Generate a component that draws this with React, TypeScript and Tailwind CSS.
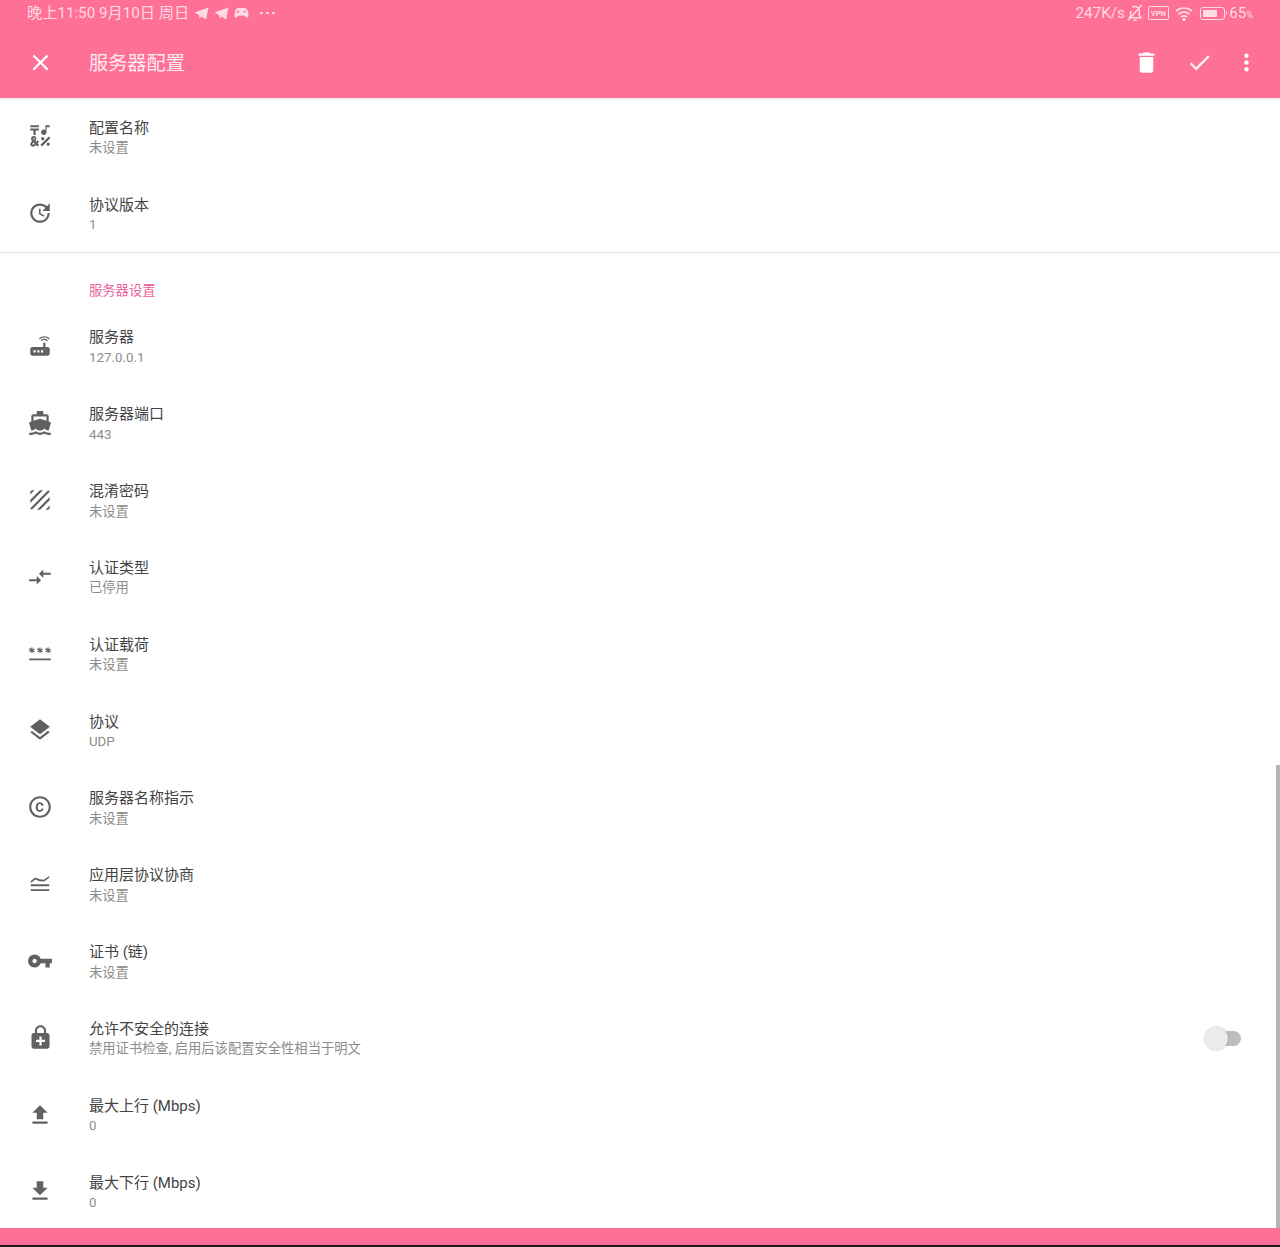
import React from "react";

const I = ({ d, size = 26, cls = "text-[#616161]" }: { d: string; size?: number; cls?: string }) => (
  <svg width={size} height={size} viewBox="0 0 24 24" fill="currentColor" className={cls}>
    <path d={d} fillRule="evenodd" />
  </svg>
);

const star = (x: number) =>
  `M${x - 0.6} 7h1.2v1.7l1.5-.85.6 1-1.5.85 1.5.85-.6 1-1.5-.85V12h-1.2v-1.7l-1.5.85-.6-1 1.5-.85-1.5-.85.6-1 1.5.85z`;

const P = {
  symbols:
    "M3 2h8v2H3zM6 11h2V7h3V5H3v2h3zM12.404 20.182l7.778-7.778 1.414 1.414-7.778 7.778zM14.5 13a1.5 1.5 0 1 1 0 3 1.5 1.5 0 0 1 0-3zM19.5 18a1.5 1.5 0 1 1 0 3 1.5 1.5 0 0 1 0-3zM15.5 11c1.38 0 2.5-1.12 2.5-2.5V4h3V2h-4v4.51C16.58 6.19 16.07 6 15.5 6 14.12 6 13 7.12 13 8.5S14.12 11 15.5 11zM9.74 15.96l-1.41 1.41-.71-.71.35-.35c.98-.98.98-2.56 0-3.54-.49-.49-1.13-.73-1.77-.73s-1.28.24-1.77.73c-.98.98-.98 2.56 0 3.54l.35.35-1.06 1.06c-.98.98-.98 2.56 0 3.54.49.49 1.13.74 1.77.74s1.28-.24 1.77-.73l1.06-1.06 1.41 1.41 1.41-1.41-1.41-1.41 1.41-1.41zM5.85 14.1c.2-.2.4-.2.5-.2s.3 0 .5.2c.28.28.28.72 0 1l-.35.35-.35-.35c-.58-.58-.58-.72-.3-1zM6.2 19.9c-.2.2-.6.2-1 0-.28-.28-.28-.72 0-1l1.06-1.06.71.71z",
  update:
    "M21 10.12h-6.78l2.74-2.82c-2.73-2.7-7.15-2.8-9.88-.1-2.73 2.71-2.73 7.08 0 9.79s7.15 2.71 9.88 0C18.32 15.65 19 14.08 19 12.1h2c0 1.98-.88 4.55-2.64 6.29-3.51 3.48-9.21 3.48-12.72 0-3.5-3.47-3.53-9.11-.02-12.58s9.14-3.47 12.65 0L21 3v7.12zM12.5 8v4.25l3.5 2.08-.72 1.21L11 13V8h1.5z",
  router:
    "M20.2 5.9l.8-.8C19.6 3.7 17.8 3 16 3s-3.6.7-5 2.1l.8.8C13 4.8 14.5 4.2 16 4.2s3 .6 4.2 1.7zm-.9.8c-.9-.9-2.1-1.4-3.3-1.4s-2.4.5-3.3 1.4l.8.8c.7-.7 1.6-1 2.5-1 .9 0 1.8.3 2.5 1l.8-.8zM19 13h-2V9h-2v4H5c-1.1 0-2 .9-2 2v4c0 1.1.9 2 2 2h14c1.1 0 2-.9 2-2v-4c0-1.1-.9-2-2-2zM8 18H6v-2h2v2zm3.5 0h-2v-2h2v2zm3.5 0h-2v-2h2v2z",
  boat:
    "M20 21c-1.39 0-2.78-.47-4-1.32-2.44 1.71-5.56 1.71-8 0C6.78 20.53 5.39 21 4 21H2v2h2c1.38 0 2.74-.35 4-.99 2.52 1.29 5.48 1.29 8 0 1.26.65 2.62.99 4 .99h2v-2h-2zM3.95 19H4c1.6 0 3.02-.88 4-2 .98 1.12 2.4 2 4 2s3.02-.88 4-2c.98 1.12 2.4 2 4 2h.05l1.89-6.68c.08-.26.06-.54-.06-.78s-.34-.42-.6-.5L20 10.62V6c0-1.1-.9-2-2-2h-3V1H9v3H6c-1.1 0-2 .9-2 2v4.62l-1.29.42c-.26.08-.48.26-.6.5s-.15.52-.06.78L3.95 19zM6 6h12v3.97L12 8 6 9.97V6z",
  texture:
    "M19.51 3.08L3.08 19.51c.09.34.27.65.51.9.25.24.56.42.9.51L20.93 4.49c-.19-.69-.73-1.23-1.42-1.41zM11.88 3L3 11.88v2.83L14.71 3h-2.83zM5 3c-1.1 0-2 .9-2 2v2l4-4H5zm14 18c.55 0 1.05-.22 1.41-.59.37-.36.59-.86.59-1.41v-2l-4 4h2zm-9.71 0h2.83L21 12.12V9.29L9.29 21z",
  compare: "M9.01 14H2v2h7.01v3L13 15l-3.99-4v3zm5.98-1v-3H22V8h-7.01V5L11 9l3.99 4z",
  password: `M2 17h20v1.8H2z${star(4.5)}${star(12)}${star(19.5)}`,
  layers: "M11.99 18.54l-7.37-5.73L3 14.07l9 7 9-7-1.63-1.27-7.38 5.74zM12 16l7.36-5.73L21 9l-9-7-9 7 1.63 1.27L12 16z",
  copyright:
    "M11.88 9.14c1.28.06 1.61 1.15 1.63 1.66h1.79c-.08-1.98-1.49-3.19-3.45-3.19C9.64 7.61 8 9 8 12.14c0 1.94.93 4.24 3.84 4.24 2.22 0 3.41-1.65 3.44-2.95h-1.79c-.03.59-.45 1.38-1.63 1.44-1.31-.04-1.86-1.06-1.86-2.73 0-2.89 1.28-2.98 1.88-3zM12 2C6.48 2 2 6.48 2 12s4.48 10 10 10 10-4.48 10-10S17.52 2 12 2zm0 18c-4.41 0-8-3.59-8-8s3.59-8 8-8 8 3.59 8 8-3.59 8-8 8z",
  alpn:
    "M3.500 12.300h17v1.700h-17zM3.500 16.800h17v1.700h-17zM3.500 9.300L7.500 6l4.500 1.600 3.500.4 5-3.500v1.800l-4.700 3.400-4.300-.3-3.700-1.600-4.300 3.200z",
  key: "M12.65 10C11.83 7.67 9.61 6 7 6c-3.31 0-6 2.69-6 6s2.69 6 6 6c2.61 0 4.83-1.67 5.65-4H17v4h4v-4h2v-4H12.65zM7 14c-1.1 0-2-.9-2-2s.9-2 2-2 2 .9 2 2-.9 2-2 2z",
  lock:
    "M18 8h-1V6c0-2.76-2.24-5-5-5S7 3.24 7 6v2H6c-1.1 0-2 .9-2 2v10c0 1.1.9 2 2 2h12c1.1 0 2-.9 2-2V10c0-1.1-.9-2-2-2zM8.9 6c0-1.71 1.39-3.1 3.1-3.1s3.1 1.39 3.1 3.1v2H8.9V6zM16 16h-3v3h-2v-3H8v-2h3v-3h2v3h3v2z",
  upload: "M9 16h6v-6h4l-7-7-7 7h4zm-4 2h14v2H5z",
  download: "M19 9h-4V3H9v6H5l7 7 7-7zM5 18v2h14v-2H5z",
  close:
    "M19 6.41L17.59 5 12 10.59 6.41 5 5 6.41 10.59 12 5 17.59 6.41 19 12 13.41 17.59 19 19 17.59 13.41 12z",
  del: "M6 19c0 1.1.9 2 2 2h8c1.1 0 2-.9 2-2V7H6v12zM19 4h-3.5l-1-1h-5l-1 1H5v2h14V4z",
  check: "M9 16.17L4.83 12l-1.42 1.41L9 19 21 7l-1.41-1.41z",
  more:
    "M12 8c1.1 0 2-.9 2-2s-.9-2-2-2-2 .9-2 2 .9 2 2 2zm0 2c-1.1 0-2 .9-2 2s.9 2 2 2 2-.9 2-2-.9-2-2-2zm0 6c-1.1 0-2 .9-2 2s.9 2 2 2 2-.9 2-2-.9-2-2-2z",
};

const Plane = () => (
  <svg width="15" height="13" viewBox="0 0 15 13" fill="currentColor">
    <path d="M0.5 5.500L14.500 0.500 12 12.500 7.500 9.500 5.500 11.500 5 8 0.500 5.500z" />
  </svg>
);

function Row({
  icon,
  title,
  sub,
  right,
  size,
}: {
  icon: string;
  title: string;
  sub: string;
  right?: React.ReactNode;
  size?: number;
}) {
  return (
    <div className="flex h-[76.85px] shrink-0 items-center">
      <div className="flex w-[89px] shrink-0 justify-center pr-[9px]">
        <I d={icon} size={size} />
      </div>
      <div className="mt-[3px] flex-1">
        <div className="h-[20px] text-[15px] leading-[20px] text-[#444444]">{title}</div>
        <div className="h-[20.5px] pt-[0.5px] text-[13.3px] leading-[20px] text-[#8c8c8c]">{sub}</div>
      </div>
      {right}
    </div>
  );
}

export default function App() {
  return (
    <div
      className="relative flex h-[1247px] w-[1280px] flex-col overflow-hidden bg-white"
      style={{ fontFamily: 'Roboto, "Noto Sans CJK SC", sans-serif' }}
    >
      <header className="h-[98px] shrink-0 bg-[#ff7096] shadow-[0_1px_2px_rgba(0,0,0,0.12)]">
        <div className="flex h-[27px] items-center justify-between pl-[27px] pr-[27px] text-[15.2px] text-white/75">
          <div className="flex items-center">
            <span>晚上11:50 9月10日 周日</span>
            <span className="ml-[5px] flex items-center gap-[5px]">
              <Plane />
              <Plane />
              <svg width="15" height="12" viewBox="0 0 15 12" fill="currentColor">
                <path
                  fillRule="evenodd"
                  d="M4 1h6c2 0 3.500 1.500 4 4l.500 4c0 1.500-1.500 2-2.500 1L10 8.500H5L3 10c-1 1-2.500.500-2.500-1L1 5c.500-2.500 1.500-4 3-4zM4 3.500a1.200 1.200 0 1 0 0 2.400 1.200 1.200 0 0 0 0-2.400zM10.500 3.500a1 1 0 1 0 0 2 1 1 0 0 0 0-2z"
                />
              </svg>
            </span>
            <span className="ml-[11px] flex items-center gap-[3px]">
              <i className="h-[2px] w-[3px] rounded-full bg-white/75" />
              <i className="h-[2px] w-[3px] rounded-full bg-white/75" />
              <i className="h-[2px] w-[3px] rounded-full bg-white/75" />
            </span>
          </div>
          <div className="flex items-center">
            <span>247K/s</span>
            <svg className="ml-[2px]" width="16" height="18" viewBox="3 2 18 21" fill="none" stroke="currentColor" strokeWidth="1.800">
              <path d="M5 18h14l-2-3v-5a5 5 0 0 0-8-4M7 10v5l-2 3M10 21h4M4 21L20 3" />
            </svg>
            <span className="ml-[5px] flex h-[14px] w-[21px] items-center justify-center rounded-[2px] border border-white/75 text-[7.500px] font-bold leading-none">
              VPN
            </span>
            <svg className="ml-[6px]" width="18" height="15" viewBox="0 0 18 15" fill="none" stroke="currentColor" strokeWidth="1.700">
              <path d="M1 5c4.500-4 11.500-4 16 0M3.500 8c3-2.500 8-2.500 11 0M6 11c1.800-1.300 4.200-1.300 6 0" />
              <circle cx="9" cy="13.500" r="0.800" fill="currentColor" />
            </svg>
            <span className="ml-[7px] flex h-[13px] w-[25px] items-center rounded-[3px] border border-white/75 p-[2px]">
              <i className="h-full w-[14px] rounded-[1px] bg-white/75" />
            </span>
            <i className="ml-[1px] h-[4px] w-[1.500px] bg-white/75" />
            <span className="ml-[2px]">
              65<span className="text-[9px]">%</span>
            </span>
          </div>
        </div>
        <div className="flex h-[71px] items-center">
          <div className="flex w-[89px] justify-center pr-[9px]">
            <I d={P.close} size={27} cls="text-white" />
          </div>
          <h1 className="mt-[3px] flex-1 text-[19.2px] font-normal text-white/85">服务器配置</h1>
          <div className="-mt-[1px] mr-[20px] flex items-center">
            <I d={P.del} size={27} cls="text-white" />
            <span className="ml-[26px]">
              <I d={P.check} size={27} cls="text-white/90" />
            </span>
            <span className="ml-[20px]">
              <I d={P.more} size={27} cls="text-white" />
            </span>
          </div>
        </div>
      </header>

      <main className="min-h-0 flex-1 overflow-hidden">
        <Row icon={P.symbols} title="配置名称" sub="未设置" />
        <Row icon={P.update} title="协议版本" sub="1" />
        <div className="h-px bg-[#e2e2e2]" />
        <div className="flex h-[55px] items-start pl-[89px] pt-[28px] text-[13.3px] leading-[20px] text-[#ec5f9b]">
          服务器设置
        </div>
        <Row icon={P.router} title="服务器" sub="127.0.0.1" />
        <Row icon={P.boat} title="服务器端口" sub="443" />
        <Row icon={P.texture} title="混淆密码" sub="未设置" />
        <Row icon={P.compare} title="认证类型" sub="已停用" />
        <Row icon={P.password} title="认证载荷" sub="未设置" />
        <Row icon={P.layers} title="协议" sub="UDP" />
        <Row icon={P.copyright} title="服务器名称指示" sub="未设置" />
        <Row icon={P.alpn} title="应用层协议协商" sub="未设置" />
        <Row icon={P.key} title="证书 (链)" sub="未设置" />
        <Row
          icon={P.lock}
          size={27}
          title="允许不安全的连接"
          sub="禁用证书检查, 启用后该配置安全性相当于明文"
          right={
            <div className="relative mr-[39px] mt-[2px] h-[15px] w-[36px] rounded-full bg-[#bdbdbd]">
              <span className="absolute left-0 -top-[4px] h-[23px] w-[23px] rounded-full bg-[#ececec] shadow-[0_0_2px_rgba(0,0,0,0.3)]" />
            </div>
          }
        />
        <Row icon={P.upload} title="最大上行 (Mbps)" sub="0" />
        <Row icon={P.download} title="最大下行 (Mbps)" sub="0" />
      </main>

      <div className="h-[17px] shrink-0 bg-[#ff7096]" />
      <div className="h-[2px] shrink-0 bg-[#1a1a1a]" />

      <div className="absolute right-0 top-[765px] h-[463px] w-[4px] bg-[#b5b5b5]" />
    </div>
  );
}
